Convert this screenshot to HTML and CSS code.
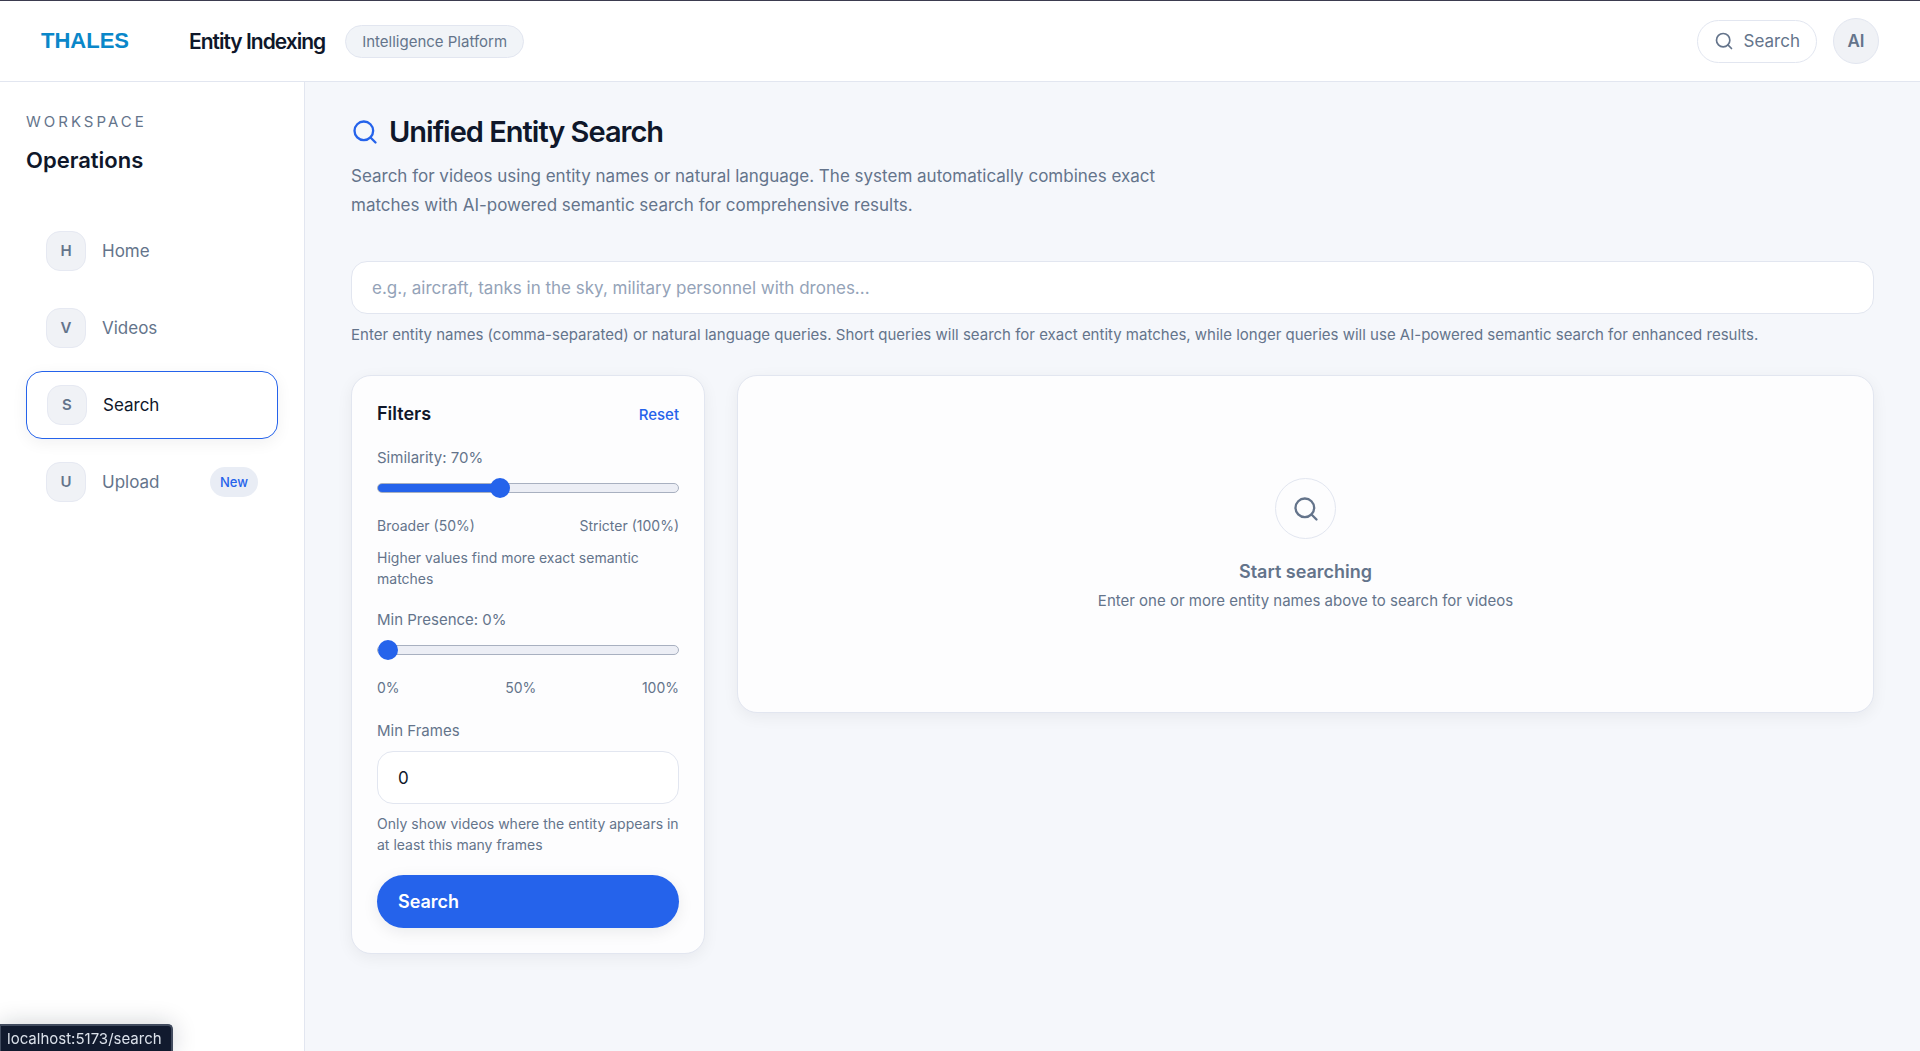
FILE: index.html
```html
<!DOCTYPE html>
<html lang="en">
<head>
  <meta charset="UTF-8" />
  <meta name="viewport" content="width=device-width, initial-scale=1.0" />
  <title>Entity Indexing</title>
  <link rel="stylesheet" href="styles.css">
</head>
<body>
  <header class="topbar">
    <a class="logo" href="#">THALES</a>
    <span class="product">Entity Indexing</span>
    <span class="platform">Intelligence Platform</span>
    <div class="topbar-actions">
      <button class="top-search" type="button">
        <svg width="20" height="20" viewBox="0 0 24 24"><circle cx="11" cy="11" r="8"/><path d="M21 21l-4.3-4.3"/></svg>
        Search
      </button>
      <button class="avatar" type="button">AI</button>
    </div>
  </header>

  <div class="layout">
    <aside class="sidebar">
      <div class="eyebrow">WORKSPACE</div>
      <h2>Operations</h2>
      <nav>
        <a class="nav-item" href="#"><span class="nav-icon">H</span>Home</a>
        <a class="nav-item" href="#"><span class="nav-icon">V</span>Videos</a>
        <a class="nav-item active" href="#"><span class="nav-icon">S</span>Search</a>
        <a class="nav-item" href="#"><span class="nav-icon">U</span>Upload<span class="badge">New</span></a>
      </nav>
    </aside>

    <main>
      <h1>
        <svg width="28" height="28" viewBox="0 0 24 24"><circle cx="11" cy="11" r="8"/><path d="M21 21l-4.3-4.3"/></svg>
        Unified Entity Search
      </h1>
      <p class="lead">Search for videos using entity names or natural language. The system automatically combines exact matches with AI-powered semantic search for comprehensive results.</p>

      <input class="text-input" id="query" type="text" aria-label="Search query" placeholder="e.g., aircraft, tanks in the sky, military personnel with drones..." />
      <p class="query-hint">Enter entity names (comma-separated) or natural language queries. Short queries will search for exact entity matches, while longer queries will use AI-powered semantic search for enhanced results.</p>

      <div class="columns">
        <form class="card filters">
          <div class="filters-head">
            <h3>Filters</h3>
            <button class="reset" type="reset">Reset</button>
          </div>

          <div class="field">
            <label for="similarity">Similarity: 70%</label>
            <input id="similarity" type="range" min="50" max="100" value="70" style="--fill: 40%" />
            <div class="scale"><span>Broader (50%)</span><span>Stricter (100%)</span></div>
            <p class="note">Higher values find more exact semantic matches</p>
          </div>

          <div class="field">
            <label for="presence">Min Presence: 0%</label>
            <input id="presence" type="range" min="0" max="100" value="0" style="--fill: 0%" />
            <div class="scale"><span>0%</span><span>50%</span><span>100%</span></div>
          </div>

          <div class="field">
            <label for="frames">Min Frames</label>
            <input class="text-input" id="frames" type="number" min="0" value="0" />
            <p class="note">Only show videos where the entity appears in at least this many frames</p>
          </div>

          <button class="submit" type="button">Search</button>
        </form>

        <section class="card results">
          <div class="empty-icon">
            <svg width="28" height="28" viewBox="0 0 24 24"><circle cx="11" cy="11" r="8"/><path d="M21 21l-4.3-4.3"/></svg>
          </div>
          <h3>Start searching</h3>
          <p>Enter one or more entity names above to search for videos</p>
        </section>
      </div>
    </main>
  </div>

  <div class="link-status">localhost:5173/search</div>
</body>
</html>
```
FILE: styles.css
```css
* {
  box-sizing: border-box;
}

body {
  margin: 0;
  min-height: 100vh;
  display: flex;
  flex-direction: column;
  font-family: Inter, sans-serif;
  font-size: 18px;
  color: #0f172a;
  background: #f5f7fb;
}

h1, h2, h3, p {
  margin: 0;
}

a {
  color: inherit;
  text-decoration: none;
}

button, input {
  font-family: inherit;
  font-size: inherit;
}

button {
  cursor: pointer;
}

svg {
  display: block;
  flex: none;
  fill: none;
  stroke: currentColor;
  stroke-width: 2;
  stroke-linecap: round;
  stroke-linejoin: round;
}

/* top bar */
.topbar {
  display: flex;
  align-items: center;
  height: 82px;
  padding: 0 41px;
  background: #fff;
  border-top: 1px solid #3b3b4f;
  border-bottom: 1px solid #e2e6f0;
}

.logo {
  margin-right: 60px;
  font-family: "Liberation Sans", Arial, sans-serif;
  font-size: 22px;
  font-weight: 700;
  color: #0a87c9;
}

.product {
  margin-right: 20px;
  font-size: 21px;
  font-weight: 600;
  letter-spacing: -1px;
}

.platform {
  padding: 0 16px;
  line-height: 31px;
  font-size: 15px;
  color: #64748b;
  background: #f1f4f8;
  border: 1px solid #e2e6f0;
  border-radius: 17px;
}

.topbar-actions {
  display: flex;
  align-items: center;
  gap: 16px;
  margin-left: auto;
}

.top-search {
  display: flex;
  align-items: center;
  gap: 10px;
  height: 43px;
  padding: 0 16px;
  font-size: 17px;
  color: #64748b;
  background: #fff;
  border: 1px solid #e2e6f0;
  border-radius: 22px;
}

.avatar {
  width: 46px;
  height: 46px;
  padding: 0;
  font-size: 17px;
  font-weight: 600;
  color: #64748b;
  background: #f0f2f6;
  border: 1px solid #e2e6f0;
  border-radius: 50%;
}

/* sidebar */
.layout {
  display: flex;
  flex: 1;
}

.sidebar {
  flex: none;
  width: 305px;
  padding: 30px 26px;
  background: #fff;
  border-right: 1px solid #e2e6f0;
}

.eyebrow {
  font-size: 15px;
  line-height: 20px;
  letter-spacing: 3px;
  color: #64748b;
}

.sidebar h2 {
  margin-top: 12px;
  font-size: 22px;
  line-height: 32px;
  font-weight: 600;
}

nav {
  display: flex;
  flex-direction: column;
  gap: 9px;
  margin-top: 41px;
}

.nav-item {
  display: flex;
  align-items: center;
  gap: 16px;
  padding: 14px 20px;
  font-size: 17px;
  color: #64748b;
  border-radius: 16px;
}

.nav-item.active {
  padding: 13px 20px;
  color: #0f172a;
  background: #fff;
  border: 1px solid #2563eb;
  box-shadow: 0 4px 16px rgba(15, 23, 42, 0.06);
}

.nav-icon {
  width: 40px;
  line-height: 38px;
  font-size: 15px;
  font-weight: 600;
  text-align: center;
  color: #64748b;
  background: #f0f2f6;
  border: 1px solid #e6e9f2;
  border-radius: 14px;
}

.badge {
  margin-left: auto;
  padding: 0 10px;
  font-size: 13px;
  line-height: 30px;
  font-weight: 500;
  color: #2563eb;
  background: #e9edf5;
  border-radius: 15px;
}

/* page */
main {
  flex: 1;
  min-width: 0;
  padding: 30px 46px 46px;
}

h1 {
  display: flex;
  align-items: center;
  gap: 10px;
  font-size: 29px;
  line-height: 40px;
  font-weight: 600;
  letter-spacing: -1px;
}

h1 svg {
  color: #2563eb;
}

.lead {
  max-width: 840px;
  margin-top: 10px;
  font-size: 17px;
  line-height: 29px;
  color: #64748b;
}

.text-input {
  display: block;
  width: 100%;
  height: 53px;
  padding: 0 20px;
  font-size: 17px;
  color: #0f172a;
  background: #fff;
  border: 1px solid #e2e6f0;
  border-radius: 16px;
  outline: none;
}

.text-input::placeholder {
  color: #94a3b8;
}

#query {
  margin-top: 41px;
}

.query-hint {
  margin-top: 9px;
  font-size: 15px;
  line-height: 24px;
  color: #64748b;
}

.columns {
  display: grid;
  grid-template-columns: 354px 1fr;
  align-items: start;
  gap: 32px;
  margin-top: 28px;
}

.card {
  padding: 25px;
  background: #fdfdfe;
  border: 1px solid #e2e6f0;
  border-radius: 20px;
  box-shadow: 0 4px 16px rgba(15, 23, 42, 0.06);
}

h3 {
  font-size: 18px;
  line-height: 26px;
  font-weight: 600;
}

/* filters */
.filters-head {
  display: flex;
  justify-content: space-between;
  align-items: center;
}

.reset {
  padding: 0;
  font-size: 15px;
  font-weight: 500;
  color: #2563eb;
  background: none;
  border: none;
}

.field {
  margin-top: 20px;
  color: #64748b;
}

.field label {
  display: block;
  font-size: 15px;
  line-height: 22px;
}

input[type="range"] {
  appearance: none;
  display: block;
  width: 100%;
  height: 20px;
  margin: 9px 0 16px;
  background: none;
}

input[type="range"]::-webkit-slider-runnable-track {
  height: 10px;
  background: linear-gradient(to right, #2563eb var(--fill), #eceef5 var(--fill));
  border: 1px solid #a8b0c0;
  border-radius: 5px;
}

input[type="range"]::-webkit-slider-thumb {
  appearance: none;
  width: 20px;
  height: 20px;
  margin-top: -6px;
  background: #2563eb;
  border-radius: 50%;
}

.scale {
  display: flex;
  justify-content: space-between;
  font-size: 14px;
  line-height: 24px;
}

.note {
  margin-top: 9px;
  font-size: 14px;
  line-height: 21px;
}

.field .text-input {
  margin-top: 9px;
}

input[type="number"] {
  appearance: textfield;
}

.submit {
  width: 100%;
  height: 53px;
  margin-top: 20px;
  padding: 0 21px;
  font-weight: 600;
  text-align: left;
  color: #fff;
  background: #2563eb;
  border: none;
  border-radius: 27px;
  box-shadow: 0 4px 16px rgba(15, 23, 42, 0.08);
}

/* results */
.results {
  display: flex;
  flex-direction: column;
  align-items: center;
  padding: 102px 25px 99px;
  color: #64748b;
}

.empty-icon {
  display: flex;
  align-items: center;
  justify-content: center;
  width: 61px;
  height: 61px;
  margin-bottom: 20px;
  border: 1px solid #e2e6f0;
  border-radius: 50%;
}

.results p {
  margin-top: 4px;
  font-size: 15px;
  line-height: 24px;
}

.link-status {
  position: fixed;
  left: 0;
  bottom: 0;
  padding: 0 9px 0 6px;
  font-size: 15px;
  line-height: 25px;
  color: #dbe1ea;
  background: #111a2e;
  border: 2px solid #414b5e;
  border-left-width: 1px;
  border-bottom: none;
  border-radius: 0 5px 0 0;
  box-shadow: 0 0 24px rgba(15, 23, 42, 0.2);
}
```
